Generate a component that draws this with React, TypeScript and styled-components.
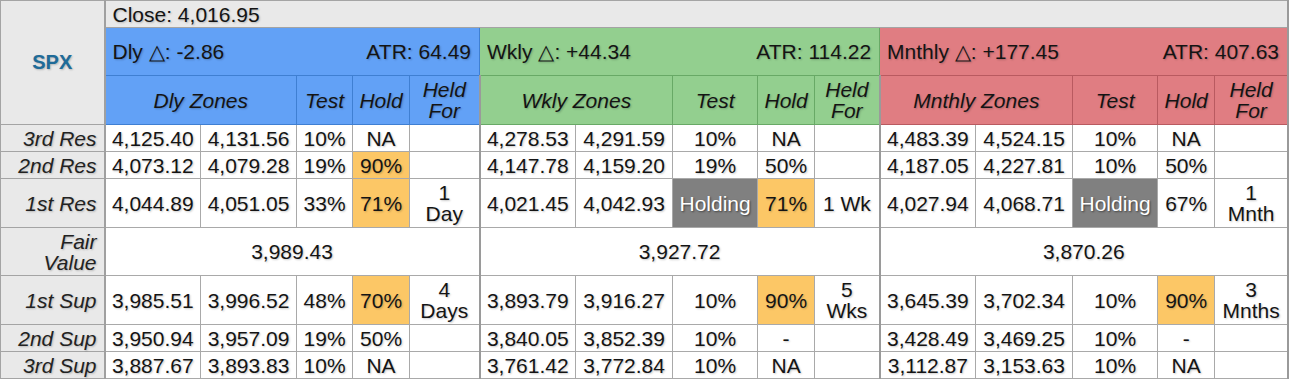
import React from "react";
import styled, { createGlobalStyle, css } from "styled-components";

const GlobalStyle = createGlobalStyle`
  html, body {
    margin: 0;
    padding: 0;
    background: #ffffff;
  }
  body {
    font-family: "Liberation Sans", Arial, sans-serif;
  }
`;

type Tone = "blue" | "green" | "red";

const tones: Record<Tone, { bg: string; line: string }> = {
  blue: { bg: "#62a1f6", line: "#3f7fd2" },
  green: { bg: "#93cf8f", line: "#68a966" },
  red: { bg: "#e07d82", line: "#b95a60" },
};

const Table = styled.table`
  border-collapse: collapse;
  table-layout: fixed;
  width: 1289px;
  font-family: "Liberation Sans", Arial, sans-serif;
  font-size: 21px;
  line-height: 21px;
  color: #141414;
  text-shadow: 1px 1px 2px rgba(0, 0, 0, 0.22);
`;

const Col = styled.col<{ $w: number }>`
  width: ${({ $w }) => $w}px;
`;

const Row = styled.tr<{ $h: number }>`
  height: ${({ $h }) => $h}px;
`;

const Corner = styled.th`
  background: #e9e9e9;
  border: 1px solid #a4a4a4;
  border-right: 2px solid #a0a0a0;
  color: #1f6b98;
  font-size: 20px;
  font-weight: bold;
  text-align: center;
  vertical-align: middle;
  padding: 0;
`;

const CloseCell = styled.th`
  background: #e9e9e9;
  border: 1px solid #a4a4a4;
  border-right: 2px solid #9a9a9a;
  font-size: 21px;
  font-weight: normal;
  text-align: left;
  padding: 0 7px;
`;

const SectionHead = styled.th<{ $tone: Tone; $last?: boolean }>`
  background: ${({ $tone }) => tones[$tone].bg};
  border: 1px solid ${({ $tone }) => tones[$tone].line};
  ${({ $last }) => $last && css`border-right: 2px solid #9a9a9a;`}
  font-size: 21px;
  font-weight: normal;
  padding: 0 8px 0 7px;
`;

const HeadLine = styled.div`
  display: flex;
  justify-content: space-between;
  align-items: center;
`;

const ColHead = styled.th<{ $tone: Tone; $last?: boolean }>`
  background: ${({ $tone }) => tones[$tone].bg};
  border: 1px solid ${({ $tone }) => tones[$tone].line};
  ${({ $last }) => $last && css`border-right: 2px solid #9a9a9a;`}
  font-size: 21px;
  font-weight: normal;
  font-style: italic;
  text-align: center;
  padding: 0;
`;

const Label = styled.th`
  background: #e9e9e9;
  border: 1px solid #a4a4a4;
  border-right: 2px solid #a0a0a0;
  font-size: 21px;
  font-weight: normal;
  font-style: italic;
  text-align: right;
  padding: 0 7px 0 0;
  color: #222;
`;

type Mark = "hold" | "holding" | undefined;

const Cell = styled.td<{ $mark?: Mark; $end?: boolean }>`
  border: 1px solid #a9a9a9;
  ${({ $end }) => $end && css`border-right: 2px solid #9a9a9a;`}
  text-align: center;
  vertical-align: middle;
  padding: 0;
  white-space: nowrap;
  background: ${({ $mark }) =>
    $mark === "hold" ? "#fcc766" : $mark === "holding" ? "#808080" : "#ffffff"};
  color: ${({ $mark }) => ($mark === "holding" ? "#ffffff" : "inherit")};
  ${({ $mark }) =>
    $mark === "holding" && css`text-shadow: 1px 1px 2px rgba(0, 0, 0, 0.5);`}
`;

type Section = {
  key: string;
  tone: Tone;
  name: string;
  delta: string;
  atr: string;
};

const sections: Section[] = [
  { key: "d", tone: "blue", name: "Dly", delta: "-2.86", atr: "64.49" },
  { key: "w", tone: "green", name: "Wkly", delta: "+44.34", atr: "114.22" },
  { key: "m", tone: "red", name: "Mnthly", delta: "+177.45", atr: "407.63" },
];

// "*" marks a highlighted hold, "#" a grey "Holding" badge, "|" a line break
type Entry = [string, string, string, string, string?];

type DataRow = { label: string; h: number; cells: Entry[] };

const rows: DataRow[] = [
  {
    label: "3rd Res",
    h: 27,
    cells: [
      ["4,125.40", "4,131.56", "10%", "NA"],
      ["4,278.53", "4,291.59", "10%", "NA"],
      ["4,483.39", "4,524.15", "10%", "NA"],
    ],
  },
  {
    label: "2nd Res",
    h: 27,
    cells: [
      ["4,073.12", "4,079.28", "19%", "*90%"],
      ["4,147.78", "4,159.20", "19%", "50%"],
      ["4,187.05", "4,227.81", "10%", "50%"],
    ],
  },
  {
    label: "1st Res",
    h: 49,
    cells: [
      ["4,044.89", "4,051.05", "33%", "*71%", "1|Day"],
      ["4,021.45", "4,042.93", "#Holding", "*71%", "1 Wk"],
      ["4,027.94", "4,068.71", "#Holding", "67%", "1|Mnth"],
    ],
  },
  {
    label: "1st Sup",
    h: 49,
    cells: [
      ["3,985.51", "3,996.52", "48%", "*70%", "4|Days"],
      ["3,893.79", "3,916.27", "10%", "*90%", "5|Wks"],
      ["3,645.39", "3,702.34", "10%", "*90%", "3|Mnths"],
    ],
  },
  {
    label: "2nd Sup",
    h: 27,
    cells: [
      ["3,950.94", "3,957.09", "19%", "50%"],
      ["3,840.05", "3,852.39", "10%", "-"],
      ["3,428.49", "3,469.25", "10%", "-"],
    ],
  },
  {
    label: "3rd Sup",
    h: 27,
    cells: [
      ["3,887.67", "3,893.83", "10%", "NA"],
      ["3,761.42", "3,772.84", "10%", "NA"],
      ["3,112.87", "3,153.63", "10%", "NA"],
    ],
  },
];

const fairValues = ["3,989.43", "3,927.72", "3,870.26"];

const widths = [104, 96, 96, 56, 57, 70, 96, 97, 85, 57, 65, 96, 97, 85, 57, 73];

function markOf(v: string): Mark {
  if (v.startsWith("*")) return "hold";
  if (v.startsWith("#")) return "holding";
  return undefined;
}

function textOf(v: string) {
  const clean = v.replace(/^[*#]/, "");
  const parts = clean.split("|");
  return parts.map((p, i) => (
    <React.Fragment key={i}>
      {i > 0 && <br />}
      {p}
    </React.Fragment>
  ));
}

function DataLine({ row }: { row: DataRow }) {
  return (
    <Row $h={row.h}>
      <Label>{row.label}</Label>
      {row.cells.map((entry, s) => {
        const vals = [entry[0], entry[1], entry[2], entry[3], entry[4] ?? ""];
        return vals.map((v, i) => (
          <Cell key={`${s}-${i}`} $mark={markOf(v)} $end={i === 4}>
            {textOf(v)}
          </Cell>
        ));
      })}
    </Row>
  );
}

export default function App() {
  const top = rows.slice(0, 3);
  const bottom = rows.slice(3);
  return (
    <>
      <GlobalStyle />
      <Table>
        <colgroup>
          {widths.map((w, i) => (
            <Col key={i} $w={w} />
          ))}
        </colgroup>
        <thead>
          <Row $h={27}>
            <Corner rowSpan={3}>SPX</Corner>
            <CloseCell colSpan={15}>Close: 4,016.95</CloseCell>
          </Row>
          <Row $h={48}>
            {sections.map((s, i) => (
              <SectionHead key={s.key} colSpan={5} $tone={s.tone} $last={i === 2}>
                <HeadLine>
                  <span>
                    {s.name} △: {s.delta}
                  </span>
                  <span>ATR: {s.atr}</span>
                </HeadLine>
              </SectionHead>
            ))}
          </Row>
          <Row $h={49}>
            {sections.map((s) => (
              <React.Fragment key={s.key}>
                <ColHead colSpan={2} $tone={s.tone}>
                  {s.name} Zones
                </ColHead>
                <ColHead $tone={s.tone}>Test</ColHead>
                <ColHead $tone={s.tone}>Hold</ColHead>
                <ColHead $tone={s.tone} $last>
                  Held
                  <br />
                  For
                </ColHead>
              </React.Fragment>
            ))}
          </Row>
        </thead>
        <tbody>
          {top.map((r) => (
            <DataLine key={r.label} row={r} />
          ))}
          <Row $h={48}>
            <Label>
              Fair
              <br />
              Value
            </Label>
            {fairValues.map((v) => (
              <Cell key={v} colSpan={5} $end>
                {v}
              </Cell>
            ))}
          </Row>
          {bottom.map((r) => (
            <DataLine key={r.label} row={r} />
          ))}
        </tbody>
      </Table>
    </>
  );
}
